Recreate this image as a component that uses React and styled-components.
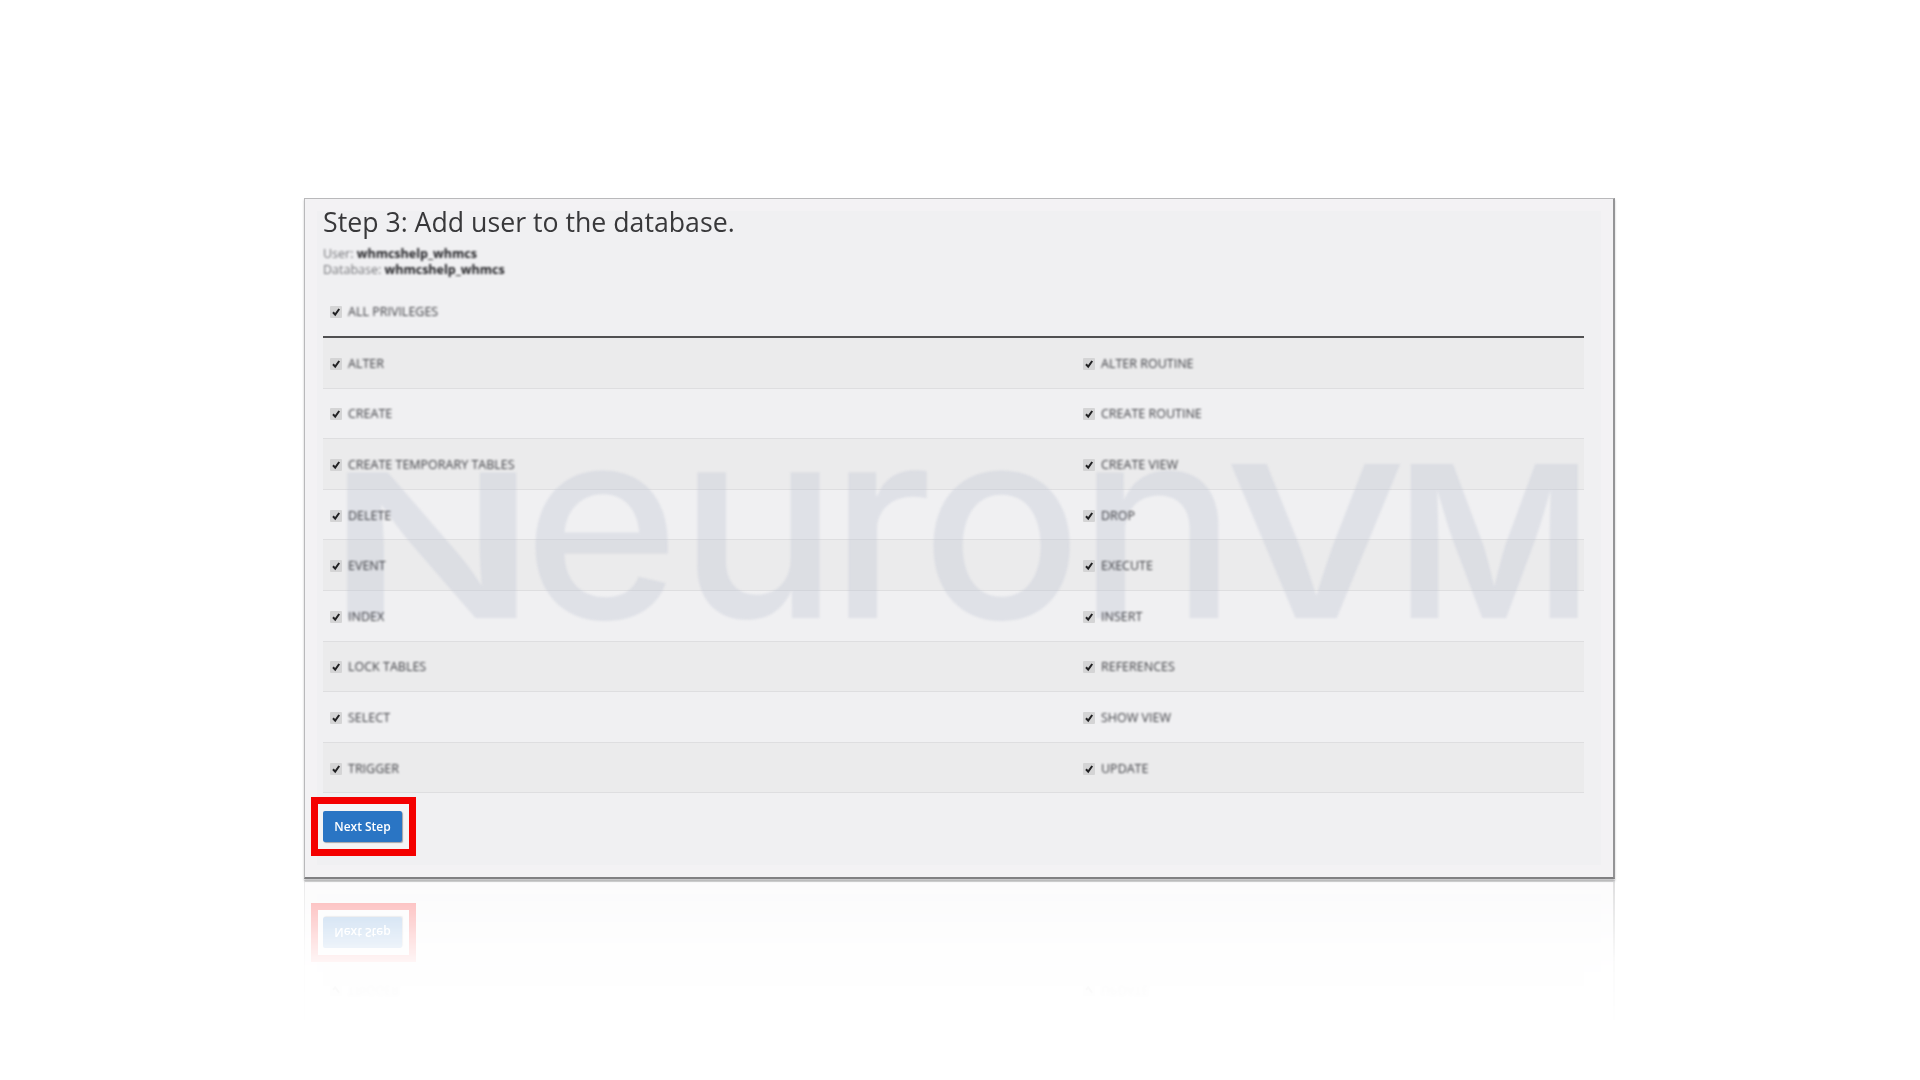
import React from 'react';
import styled, { createGlobalStyle } from 'styled-components';

const GlobalStyle = createGlobalStyle`
  html, body {
    margin: 0;
    background: #fff;
    font-family: "Open Sans", "Liberation Sans", sans-serif;
  }
  * { box-sizing: border-box; }
`;

const Page = styled.div`
  width: 1920px;
  height: 1080px;
  padding: 198px 0 0 304px;
  overflow: hidden;
`;

const Panel = styled.div`
  position: relative;
  width: 1311px;
  height: 681px;
  padding: 5px 29px 0 18px;
  background: #f0f0f2;
  border: 1px solid #b9b9bb;
  border-right: 2px solid #949496;
  border-bottom: 2px solid #808082;
  box-shadow: 0 2px 2px rgba(90, 90, 95, 0.35), inset 0 0 0 12px #f3f2f4;
  -webkit-box-reflect: below 1px linear-gradient(
    to bottom,
    transparent 78%,
    rgba(255, 255, 255, 0.04) 88%,
    rgba(255, 255, 255, 0.3) 100%
  );
`;

const Title = styled.h1`
  margin: 0;
  font-size: 26.7px;
  line-height: 36px;
  font-weight: 400;
  color: #38383a;
  filter: blur(0.7px);
`;

const Meta = styled.div`
  margin-top: 6px;
  font-size: 12.5px;
  line-height: 16px;
  color: #77787c;
  filter: blur(0.8px);

  b {
    font-weight: 700;
    color: #1e1e22;
  }
`;

const AllRow = styled.div`
  display: flex;
  align-items: center;
  margin-top: 6px;
  height: 54px;
  padding: 3px 0 0 7px;
  border-bottom: 2px solid #505052;
`;

const Grid = styled.div`
  display: grid;
  grid-template-columns: 753px 1fr;
`;

const Row = styled.div`
  display: flex;
  align-items: center;
  height: 50.6px;
  padding: 2px 0 0 7px;
  background: ${p => (p.$shaded ? '#ebebec' : 'transparent')};
  border-bottom: 1px solid #dedee0;
`;

const Box = styled.span`
  position: relative;
  z-index: 1;
  display: flex;
  align-items: center;
  justify-content: center;
  width: 12px;
  height: 12px;
  margin-right: 6px;
  flex-shrink: 0;
  background: #d4d4d5;
  border-radius: 1px;
  filter: blur(0.6px);
`;

const Label = styled.span`
  position: relative;
  z-index: 1;
  display: block;
  font-size: 12.5px;
  line-height: 16px;
  color: #404146;
  filter: blur(0.8px);
`;

const Watermark = styled.div`
  position: absolute;
  left: 22px;
  top: 188px;
  display: flex;
  align-items: baseline;
  font-family: Inter, "Liberation Sans", sans-serif;
  line-height: 267px;
  color: rgba(190, 195, 210, 0.34);
  white-space: nowrap;
  pointer-events: none;
  filter: blur(0.8px);
`;

// each letter of the wordmark has its own size and stretch
const Letter = styled.span`
  display: inline-block;
  width: ${p => p.$width}px;
  font-size: ${p => p.$size}px;
  font-weight: ${p => p.$weight || 500};
  transform: scaleX(${p => p.$stretch || 1});
  transform-origin: left center;
`;

const Highlight = styled.div`
  display: inline-block;
  margin: 4px 0 0 -12px;
  padding: 7px 7px 7px 5px;
  border: 7px solid #f40000;
  background: #f4f4f5;
`;

const NextButton = styled.button`
  display: block;
  width: 79px;
  height: 31px;
  padding: 0;
  border: 0;
  border-radius: 2px;
  background: #2a75c4;
  box-shadow: 1px 1px 1px rgba(80, 80, 90, 0.5);
  color: #fff;
  font-family: inherit;
  font-size: 12px;
  font-weight: 600;
`;

const ButtonText = styled.span`
  display: block;
  filter: blur(0.6px);
`;

const Tick = () => (
  <svg width="10" height="10" viewBox="0 0 10 10">
    <path d="M2 5.2 L4.2 7.6 L8.2 2" fill="none" stroke="#222224" strokeWidth="2" />
  </svg>
);

const Privilege = ({ name, shaded }) => (
  <Row $shaded={shaded}>
    <Box><Tick /></Box>
    <Label>{name}</Label>
  </Row>
);

const rows = [
  ['ALTER', 'ALTER ROUTINE'],
  ['CREATE', 'CREATE ROUTINE'],
  ['CREATE TEMPORARY TABLES', 'CREATE VIEW'],
  ['DELETE', 'DROP'],
  ['EVENT', 'EXECUTE'],
  ['INDEX', 'INSERT'],
  ['LOCK TABLES', 'REFERENCES'],
  ['SELECT', 'SHOW VIEW'],
  ['TRIGGER', 'UPDATE'],
];

const App = () => (
  <Page>
    <GlobalStyle />
    <Panel>
      <Title>Step 3: Add user to the database.</Title>
      <Meta>
        User: <b>whmcshelp_whmcs</b>
        <br />
        Database: <b>whmcshelp_whmcs</b>
      </Meta>
      <AllRow>
        <Box><Tick /></Box>
        <Label>ALL PRIVILEGES</Label>
      </AllRow>
      <Grid>
        {rows.map((pair, i) => (
          <React.Fragment key={pair[0]}>
            <Privilege name={pair[0]} shaded={i % 2 === 0} />
            <Privilege name={pair[1]} shaded={i % 2 === 0} />
          </React.Fragment>
        ))}
      </Grid>
      <Highlight>
        <NextButton><ButtonText>Next Step</ButtonText></NextButton>
      </Highlight>
      <Watermark>
        <Letter $size={200} $width={196} $stretch={1.38} $weight={600}>N</Letter>
        <Letter $size={267} $width={155}>e</Letter>
        <Letter $size={267} $width={151}>u</Letter>
        <Letter $size={267} $width={92}>r</Letter>
        <Letter $size={267} $width={156}>o</Letter>
        <Letter $size={267} $width={148}>n</Letter>
        <Letter $size={211} $width={170} $stretch={1.18} $weight={600}>V</Letter>
        <Letter $size={211} $width={186} $stretch={1.02} $weight={600}>M</Letter>
      </Watermark>
    </Panel>
  </Page>
);

export default App;
